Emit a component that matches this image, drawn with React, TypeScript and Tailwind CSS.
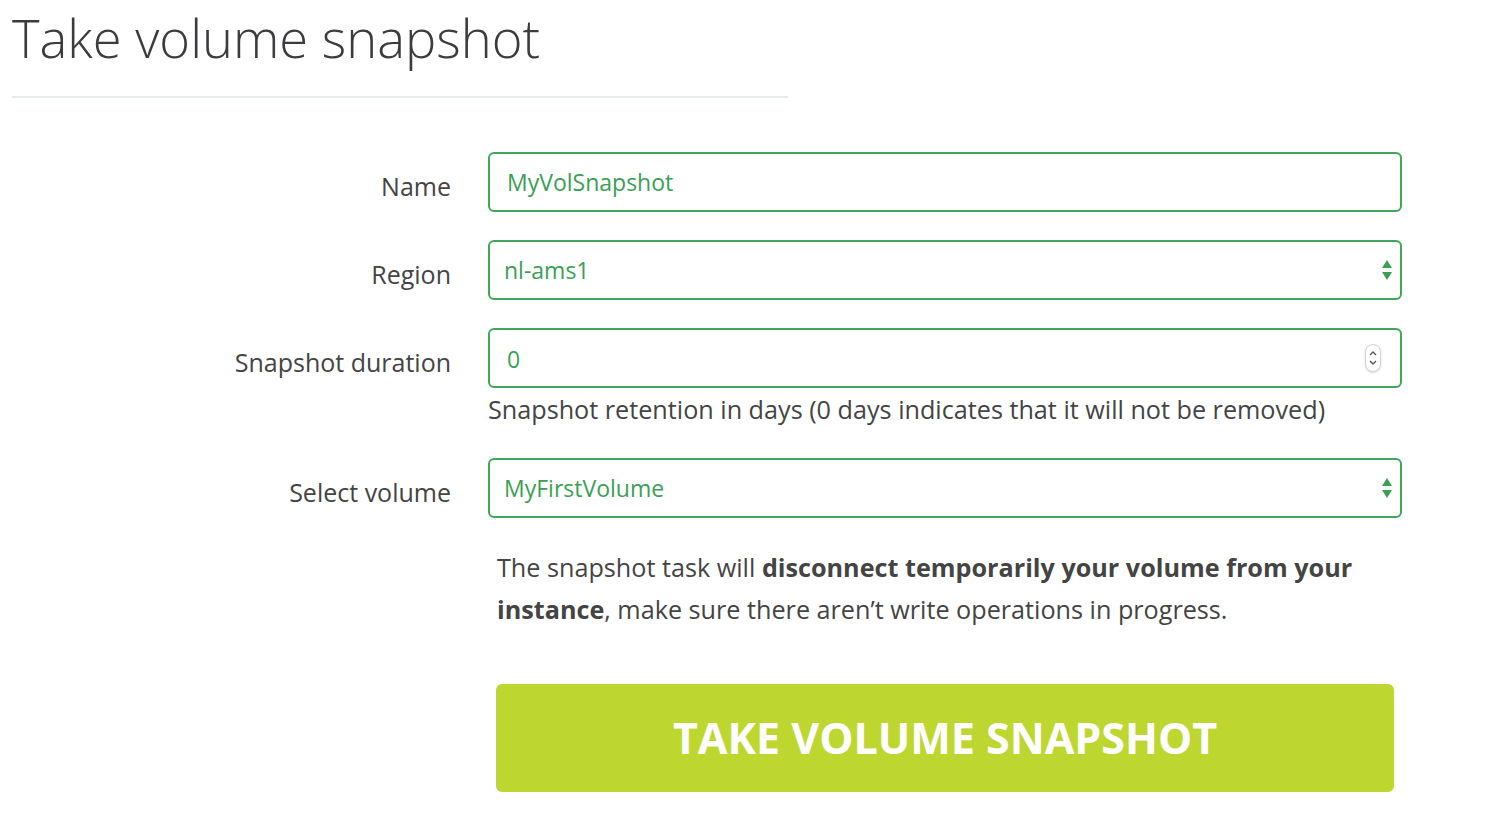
import { useState } from "react";

function Arrows() {
  return (
    <svg width="12" height="22" viewBox="0 0 12 22" className="absolute right-[9px] top-1/2 -translate-y-1/2 pointer-events-none">
      <path d="M6 1 L11 9 L1 9 Z" fill="#3a9f55" />
      <path d="M6 21 L11 13 L1 13 Z" fill="#3a9f55" />
    </svg>
  );
}

function Spinner() {
  return (
    <div className="absolute right-[21px] top-1/2 -translate-y-1/2 w-[16px] h-[28px] rounded-full border border-[#d4d4d4] bg-white shadow-[0_1px_2px_rgba(0,0,0,0.15)] flex flex-col items-center justify-center pointer-events-none">
      <svg width="10" height="20" viewBox="0 0 10 20">
        <path d="M2 7 L5 4 L8 7" stroke="#555" strokeWidth="1.4" fill="none" />
        <path d="M2 13 L5 16 L8 13" stroke="#555" strokeWidth="1.4" fill="none" />
      </svg>
    </div>
  );
}

function Row({ label, children }: any) {
  return (
    <div className="grid grid-cols-[451px_914px] gap-x-[37px] items-start">
      <label className="h-[60px] pt-[9px] flex items-center justify-end text-[25px] text-[#444]">{label}</label>
      <div>{children}</div>
    </div>
  );
}

export default function App() {
  const [name, setName] = useState("MyVolSnapshot");
  const [region, setRegion] = useState("nl-ams1");
  const [duration, setDuration] = useState("0");
  const [volume, setVolume] = useState("MyFirstVolume");

  const boxCls =
    "w-full h-[60px] border-2 border-[#43a55a] rounded-[6px] bg-white text-[23px] text-[#3a9f55] outline-none appearance-none";

  return (
    <div className="w-[1486px] h-[826px] bg-white font-['Open_Sans',sans-serif]">
      {/* Header */}
      <div className="pl-[12px] pt-[7px]">
        <h1 className="text-[52.5px] font-light text-[#3c3c40] leading-[62px]">Take volume snapshot</h1>
        <div className="w-[776px] h-[2px] bg-[#e8ebee] mt-[27px]"></div>
      </div>

      {/* Form */}
      <div className="mt-[54px] flex flex-col">
        <Row label="Name">
          <input
            className={boxCls + " px-[17px]"}
            value={name}
            onChange={(e) => setName(e.target.value)}
          />
        </Row>

        <div className="mt-[28px]">
          <Row label="Region">
            <div className="relative">
              <select className={boxCls + " px-[14px]"} value={region} onChange={(e) => setRegion(e.target.value)}>
                <option>nl-ams1</option>
                <option>de-fra1</option>
              </select>
              <Arrows />
            </div>
          </Row>
        </div>

        <div className="mt-[28px]">
          <Row label="Snapshot duration">
            <div className="relative">
              <input
                className={boxCls + " px-[17px] pt-[2px]"}
                value={duration}
                onChange={(e) => setDuration(e.target.value)}
              />
              <Spinner />
            </div>
            <p className="text-[25.2px] text-[#444] leading-[32px] mt-[5px]">
              Snapshot retention in days (0 days indicates that it will not be removed)
            </p>
          </Row>
        </div>

        <div className="mt-[33px]">
          <Row label="Select volume">
            <div className="relative">
              <select className={boxCls + " px-[14px]"} value={volume} onChange={(e) => setVolume(e.target.value)}>
                <option>MyFirstVolume</option>
              </select>
              <Arrows />
            </div>
          </Row>
        </div>

        <div className="ml-[497px] w-[880px] mt-[28px]">
          <p className="text-[25.2px] text-[#444] leading-[42px]">
            The snapshot task will <b className="font-bold">disconnect temporarily your volume from your instance</b>, make sure there aren’t write operations in progress.
          </p>
        </div>

        <div className="ml-[496px] mt-[54px]">
          <button className="w-[898px] h-[108px] bg-[#bed730] rounded-[6px] text-white text-[43px] font-bold">
            TAKE VOLUME SNAPSHOT
          </button>
        </div>
      </div>
    </div>
  );
}
